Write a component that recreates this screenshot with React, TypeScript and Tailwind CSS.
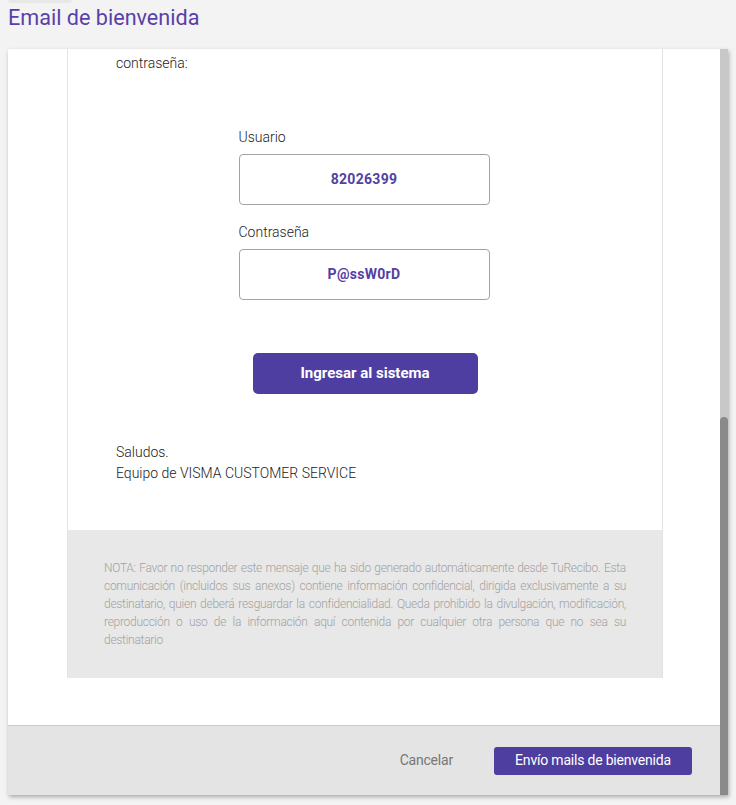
import React from "react";

const font = { fontFamily: "Roboto, 'Noto Sans', sans-serif" };

function Field({ label, value }: { label: string; value: string }) {
  return (
    <div className="flex flex-col">
      <label className="text-[14px] leading-[20px] text-[#222] font-light">{label}</label>
      <div className="mt-[7px] h-[51px] w-[251px] rounded-[4px] border border-[#a3a3a3] flex items-center justify-center text-[14px] font-bold text-[#5340a4] tracking-[0.3px]">
        {value}
      </div>
    </div>
  );
}

export default function App() {
  return (
    <div className="w-[736px] h-[805px] bg-[#f3f3f3] overflow-hidden" style={font}>
      {/* header */}
      <div className="ml-2 h-[3px] w-[64px] rounded-b bg-[#e8e8e8]" />
      <h1 className="h-[46px] px-2 text-[21.6px] leading-[30px] text-[#5a3fa8]">Email de bienvenida</h1>

      {/* modal */}
      <div className="mx-2 h-[746px] flex bg-white shadow-[1px_2px_4px_rgba(0,0,0,0.3)] rounded-t-[2px]">
        <div className="flex-1 flex flex-col">
          <div className="flex-1 overflow-hidden">
            <div className="ml-[59px] w-[596px] border-x border-[#e3e3e3]">
              <div className="pl-12 pt-1 pb-[46px]">
                <p className="text-[14px] leading-[20px] text-[#222] font-light">contraseña:</p>
                <div className="mt-[54px] flex flex-col items-center pr-12">
                  <div className="flex flex-col gap-[17px] -ml-[2px]">
                    <Field label="Usuario" value="82026399" />
                    <Field label="Contraseña" value="P@ssW0rD" />
                  </div>
                  <button className="mt-[53px] h-[41px] w-[225px] rounded-[5px] bg-[#4f3ea1] text-white text-[15px] font-bold">
                    Ingresar al sistema
                  </button>
                </div>
                <div className="mt-[48px] text-[14px] leading-[21px] text-[#222] font-light">
                  <p>Saludos.</p>
                  <p>Equipo de VISMA CUSTOMER SERVICE</p>
                </div>
              </div>
              <div className="bg-[#e8e8e8] px-9 pt-[29px] pb-[29px] h-[148px]">
                <p className="text-[12px] leading-[18px] text-[#a2a2a2] text-justify font-light tracking-[-0.28px]">
                  NOTA: Favor no responder este mensaje que ha sido generado automáticamente desde TuRecibo. Esta
                  comunicación (incluidos sus anexos) contiene información confidencial, dirigida exclusivamente a su
                  destinatario, quien deberá resguardar la confidencialidad. Queda prohibido la divulgación, modificación,
                  reproducción o uso de la información aquí contenida por cualquier otra persona que no sea su
                  destinatario
                </p>
              </div>
            </div>
          </div>
          <div className="h-[70px] border-t border-[#c9c9c9] bg-[#e4e4e4] flex items-center justify-end pr-[28px] gap-[41px]">
            <button className="text-[14px] text-[#777] tracking-[-0.2px]">Cancelar</button>
            <button className="h-[28px] w-[198px] rounded-[3px] bg-[#4e3ea0] text-white text-[14px] tracking-[-0.2px]">
              Envío mails de bienvenida
            </button>
          </div>
        </div>
        {/* scrollbar */}
        <div className="w-2 bg-[#c8c8c8] flex flex-col">
          <div className="flex-1 max-h-[368px]" />
          <div className="flex-1 rounded-t-[4px] bg-[#8a8a8a]" />
        </div>
      </div>
    </div>
  );
}
